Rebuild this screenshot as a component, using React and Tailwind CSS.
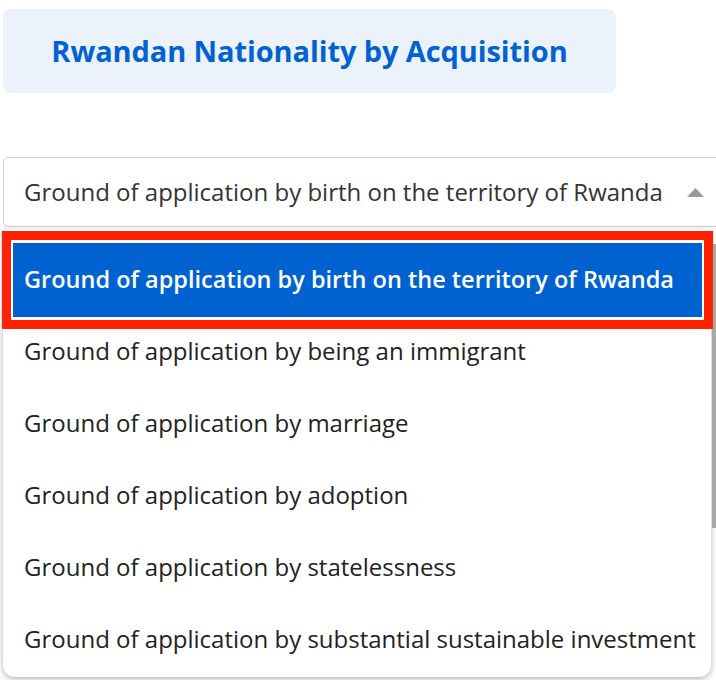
import React from "react";

const options = [
  "Ground of application by birth on the territory of Rwanda",
  "Ground of application by being an immigrant",
  "Ground of application by marriage",
  "Ground of application by adoption",
  "Ground of application by statelessness",
  "Ground of application by substantial sustainable investment",
];

export default function App() {
  return (
    <div
      className="relative w-[716px] h-[680px] overflow-hidden bg-white"
      style={{ fontFamily: "'Open Sans', Lato, sans-serif" }}
    >
      <div className="ml-[3px] mt-[9px] flex h-[84px] w-[613px] items-center justify-center rounded-[8px] bg-[#EBF2FC]">
        <h1 className="text-[29px] font-bold text-[#0062D1] tracking-[-0.1px]">
          Rwandan Nationality by Acquisition
        </h1>
      </div>

      <div className="ml-[3px] mt-[64px] flex h-[70px] w-[740px] items-center rounded-[5px] border border-[#cfcfcf] pl-[20px]">
        <span className="text-[24px] text-[#333333]">{options[0]}</span>
        <svg className="ml-[24px]" width="17" height="9" viewBox="0 0 17 9">
          <polygon points="8.5,0 17,9 0,9" fill="#9a9a9a" />
        </svg>
      </div>

      <div className="ml-[3px] mt-[2px] w-[708px] rounded-b-[12px] bg-white pt-[14px] shadow-[0_2px_6px_rgba(0,0,0,0.3)]">
        <div className="flex h-[74px] items-center rounded-tl-[10px] bg-[#0062D1] pl-[21px] text-[23.5px] font-semibold text-white">
          {options[0]}
        </div>
        <div className="-mt-[2px] pb-[2px]">
          {options.slice(1).map((o) => (
            <div key={o} className="flex h-[72px] items-center pl-[21px] text-[24px] text-[#222222]">
              {o}
            </div>
          ))}
        </div>
      </div>

      <div className="absolute left-[712px] top-[244px] h-[284px] w-[4px] bg-[#a8a8a8]" />

      <div className="absolute left-[2px] top-[231px] h-[98px] w-[711px] border-[9px] border-[#FF2200] shadow-[inset_0_0_0_2px_#ffffff]" />
    </div>
  );
}
